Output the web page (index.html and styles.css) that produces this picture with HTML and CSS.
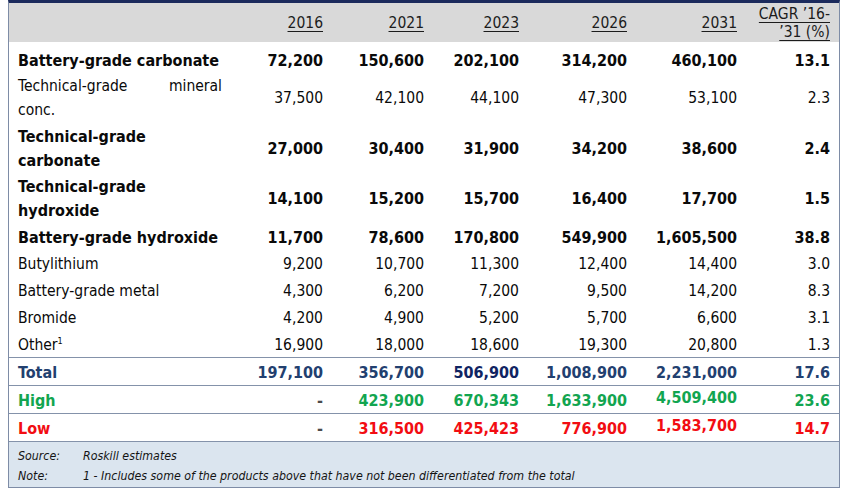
FILE: index.html
```html
<!DOCTYPE html>
<html lang="en">
<head>
<meta charset="utf-8">
<title>Lithium demand by product</title>
<link rel="stylesheet" href="styles.css">
</head>
<body>
<div class="frame">
  <table class="data">
    <thead>
      <tr class="head">
        <th class="c0"></th>
        <th class="c1"><span class="ul">2016</span></th>
        <th class="c2"><span class="ul">2021</span></th>
        <th class="c3"><span class="ul">2023</span></th>
        <th class="c4"><span class="ul">2026</span></th>
        <th class="c5"><span class="ul">2031</span></th>
        <th class="c6 last"><span class="ul">CAGR ’16-</span><br><span class="ul">’31 (%)</span></th>
      </tr>
    </thead>
    <tbody>
      <tr class="first bold">
        <td class="label nowrap">Battery-grade carbonate</td>
        <td>72,200</td><td>150,600</td><td>202,100</td><td>314,200</td><td>460,100</td><td class="last">13.1</td>
      </tr>
      <tr class="two">
        <td class="label">Technical-grade mineral conc.</td>
        <td>37,500</td><td>42,100</td><td>44,100</td><td>47,300</td><td>53,100</td><td class="last">2.3</td>
      </tr>
      <tr class="two bold">
        <td class="label">Technical-grade carbonate</td>
        <td>27,000</td><td>30,400</td><td>31,900</td><td>34,200</td><td>38,600</td><td class="last">2.4</td>
      </tr>
      <tr class="two bold">
        <td class="label">Technical-grade hydroxide</td>
        <td>14,100</td><td>15,200</td><td>15,700</td><td>16,400</td><td>17,700</td><td class="last">1.5</td>
      </tr>
      <tr class="bold">
        <td class="label nowrap">Battery-grade hydroxide</td>
        <td>11,700</td><td>78,600</td><td>170,800</td><td>549,900</td><td>1,605,500</td><td class="last">38.8</td>
      </tr>
      <tr>
        <td class="label">Butylithium</td>
        <td>9,200</td><td>10,700</td><td>11,300</td><td>12,400</td><td>14,400</td><td class="last">3.0</td>
      </tr>
      <tr>
        <td class="label">Battery-grade metal</td>
        <td>4,300</td><td>6,200</td><td>7,200</td><td>9,500</td><td>14,200</td><td class="last">8.3</td>
      </tr>
      <tr>
        <td class="label">Bromide</td>
        <td>4,200</td><td>4,900</td><td>5,200</td><td>5,700</td><td>6,600</td><td class="last">3.1</td>
      </tr>
      <tr>
        <td class="label">Other<span class="sup">1</span></td>
        <td>16,900</td><td>18,000</td><td>18,600</td><td>19,300</td><td>20,800</td><td class="last">1.3</td>
      </tr>
      <tr class="sum total">
        <td class="label">Total</td>
        <td>197,100</td><td>356,700</td><td class="deep">506,900</td><td>1,008,900</td><td>2,231,000</td><td class="last">17.6</td>
      </tr>
      <tr class="sum high">
        <td class="label">High</td>
        <td class="dash">-</td><td>423,900</td><td>670,343</td><td>1,633,900</td><td class="raise">4,509,400</td><td class="last">23.6</td>
      </tr>
      <tr class="sum low">
        <td class="label">Low</td>
        <td class="dash">-</td><td>316,500</td><td>425,423</td><td>776,900</td><td class="raise">1,583,700</td><td class="last">14.7</td>
      </tr>
    </tbody>
  </table>
  <div class="notes">
    <span>Source:</span><span>Roskill estimates</span>
    <span>Note:</span><span>1 - Includes some of the products above that have not been differentiated from the total</span>
  </div>
</div>
</body>
</html>
```

FILE: styles.css
```css
html, body {
  margin: 0;
  padding: 0;
  background: #ffffff;
}

body {
  font-family: "DejaVu Sans Condensed", "DejaVu Sans", sans-serif;
}

.frame {
  margin-left: 8px;
  width: 832px;
  box-sizing: border-box;
  border-left: 1px solid #7e8ca6;
  border-right: 1px solid #7e8ca6;
  border-bottom: 1px solid #7e8ca6;
  border-top: 3px solid #1b2a5c;
}

.data {
  width: 830px;
  border-collapse: collapse;
  table-layout: fixed;
  font-size: 15.5px;
  color: #0a0a0a;
}

.data th,
.data td {
  box-sizing: border-box;
  padding: 0;
  text-align: right;
  vertical-align: middle;
  font-weight: normal;
}

.c0 { width: 213px; }
.c1 { width: 101px; }
.c2 { width: 101px; }
.c3 { width: 95px; }
.c4 { width: 108px; }
.c5 { width: 110px; }
.c6 { width: 102px; }

.head th {
  background: #d9d9d9;
  height: 39px;
  line-height: 18px;
  color: #1c1c1c;
}

.ul {
  text-decoration: underline;
  text-underline-offset: 3px;
}

.data .last {
  padding-right: 9px;
}

.data td.label {
  text-align: justify;
  padding-left: 9px;
}

.data td.nowrap {
  white-space: nowrap;
}

.data tbody td {
  line-height: 23px;
  padding-top: 4px;
}

.data tr.first td {
  padding-top: 7px;
}

.data tr.two td {
  line-height: 23.5px;
  padding-top: 3px;
}

.data tr.bold td {
  font-weight: bold;
  font-size: 16px;
}

.sup {
  font-size: 9px;
  vertical-align: 6px;
  line-height: 0;
}

.data tr.sum td {
  border-top: 1px solid #8492aa;
  line-height: 22px;
  padding-top: 4px;
  padding-bottom: 1px;
  font-weight: bold;
  font-size: 16px;
}

.data tr.total td { color: #22406f; }
.data tr.total td.deep { color: #102462; }
.data tr.high td { color: #12a550; }
.data tr.low td { color: #f20d12; }

.data tr.sum td.dash {
  color: #4a4a4a;
}

.data tr.sum td.raise {
  padding-top: 1px;
  padding-bottom: 4px;
}

.notes {
  display: grid;
  grid-template-columns: 65px 1fr;
  background: #dbe5ef;
  border-top: 1px solid #8492aa;
  padding: 4px 9px 1px;
  font-size: 12.3px;
  line-height: 20px;
  font-style: italic;
  color: #141414;
}
```
